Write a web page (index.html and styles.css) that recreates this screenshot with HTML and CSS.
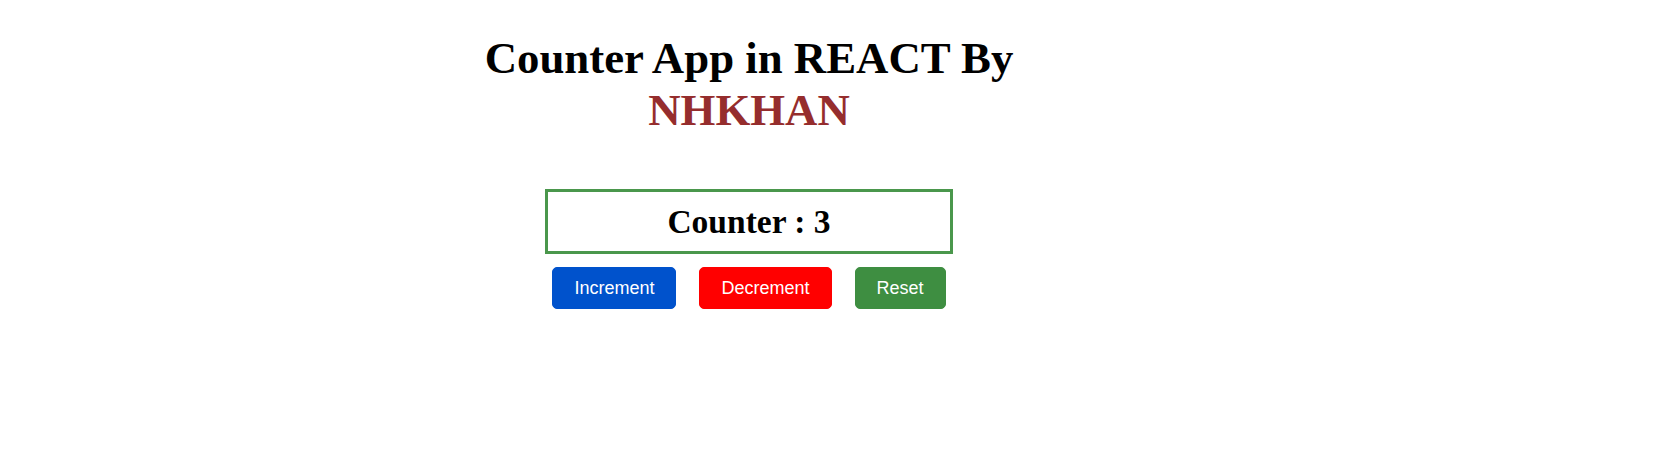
FILE: index.html
```html
<!DOCTYPE html>
<html>
<head>
<meta charset="utf-8">
<title>Counter App</title>
<link rel="stylesheet" href="styles.css">
</head>
<body>
<div class="app">
  <h1 class="title">Counter App in REACT By <span class="author">NHKHAN</span></h1>
  <div class="counter-box">
    <h2 class="counter-text">Counter : 3</h2>
  </div>
  <div class="buttons">
    <button class="btn btn-inc">Increment</button>
    <button class="btn btn-dec">Decrement</button>
    <button class="btn btn-reset">Reset</button>
  </div>
</div>
</body>
</html>
```
FILE: styles.css
```css
body {
  margin: 8px;
  background: #ffffff;
  font-family: "Liberation Serif", "Times New Roman", serif;
}
.app {
  width: 1482px;
  text-align: center;
}
.title {
  margin: 24px 0 0;
  font-size: 44.8px;
  line-height: 52px;
  font-weight: bold;
  color: #000;
}
.author {
  display: block;
  color: #952d2d;
}
.counter-box {
  box-sizing: border-box;
  width: 408px;
  margin: 53px auto 0;
  border: 3px solid #4a974c;
  padding: 11px 0;
}
.counter-text {
  margin: 0;
  font-size: 33.5px;
  line-height: 37px;
  font-weight: bold;
  color: #000;
}
.buttons {
  display: flex;
  justify-content: center;
  gap: 23px;
  margin-top: 13px;
}
.btn {
  font-family: "Liberation Sans", Arial, sans-serif;
  font-size: 18px;
  line-height: 20px;
  color: #fff;
  padding: 10px 21px;
  border: 1px solid transparent;
  border-radius: 5px;
  cursor: pointer;
}
.btn-inc { background: #0052cc; border-color: #0052cc; }
.btn-dec { background: #ff0000; border-color: #ff0000; }
.btn-reset { background: #3e8e41; border-color: #3e8e41; }
```
